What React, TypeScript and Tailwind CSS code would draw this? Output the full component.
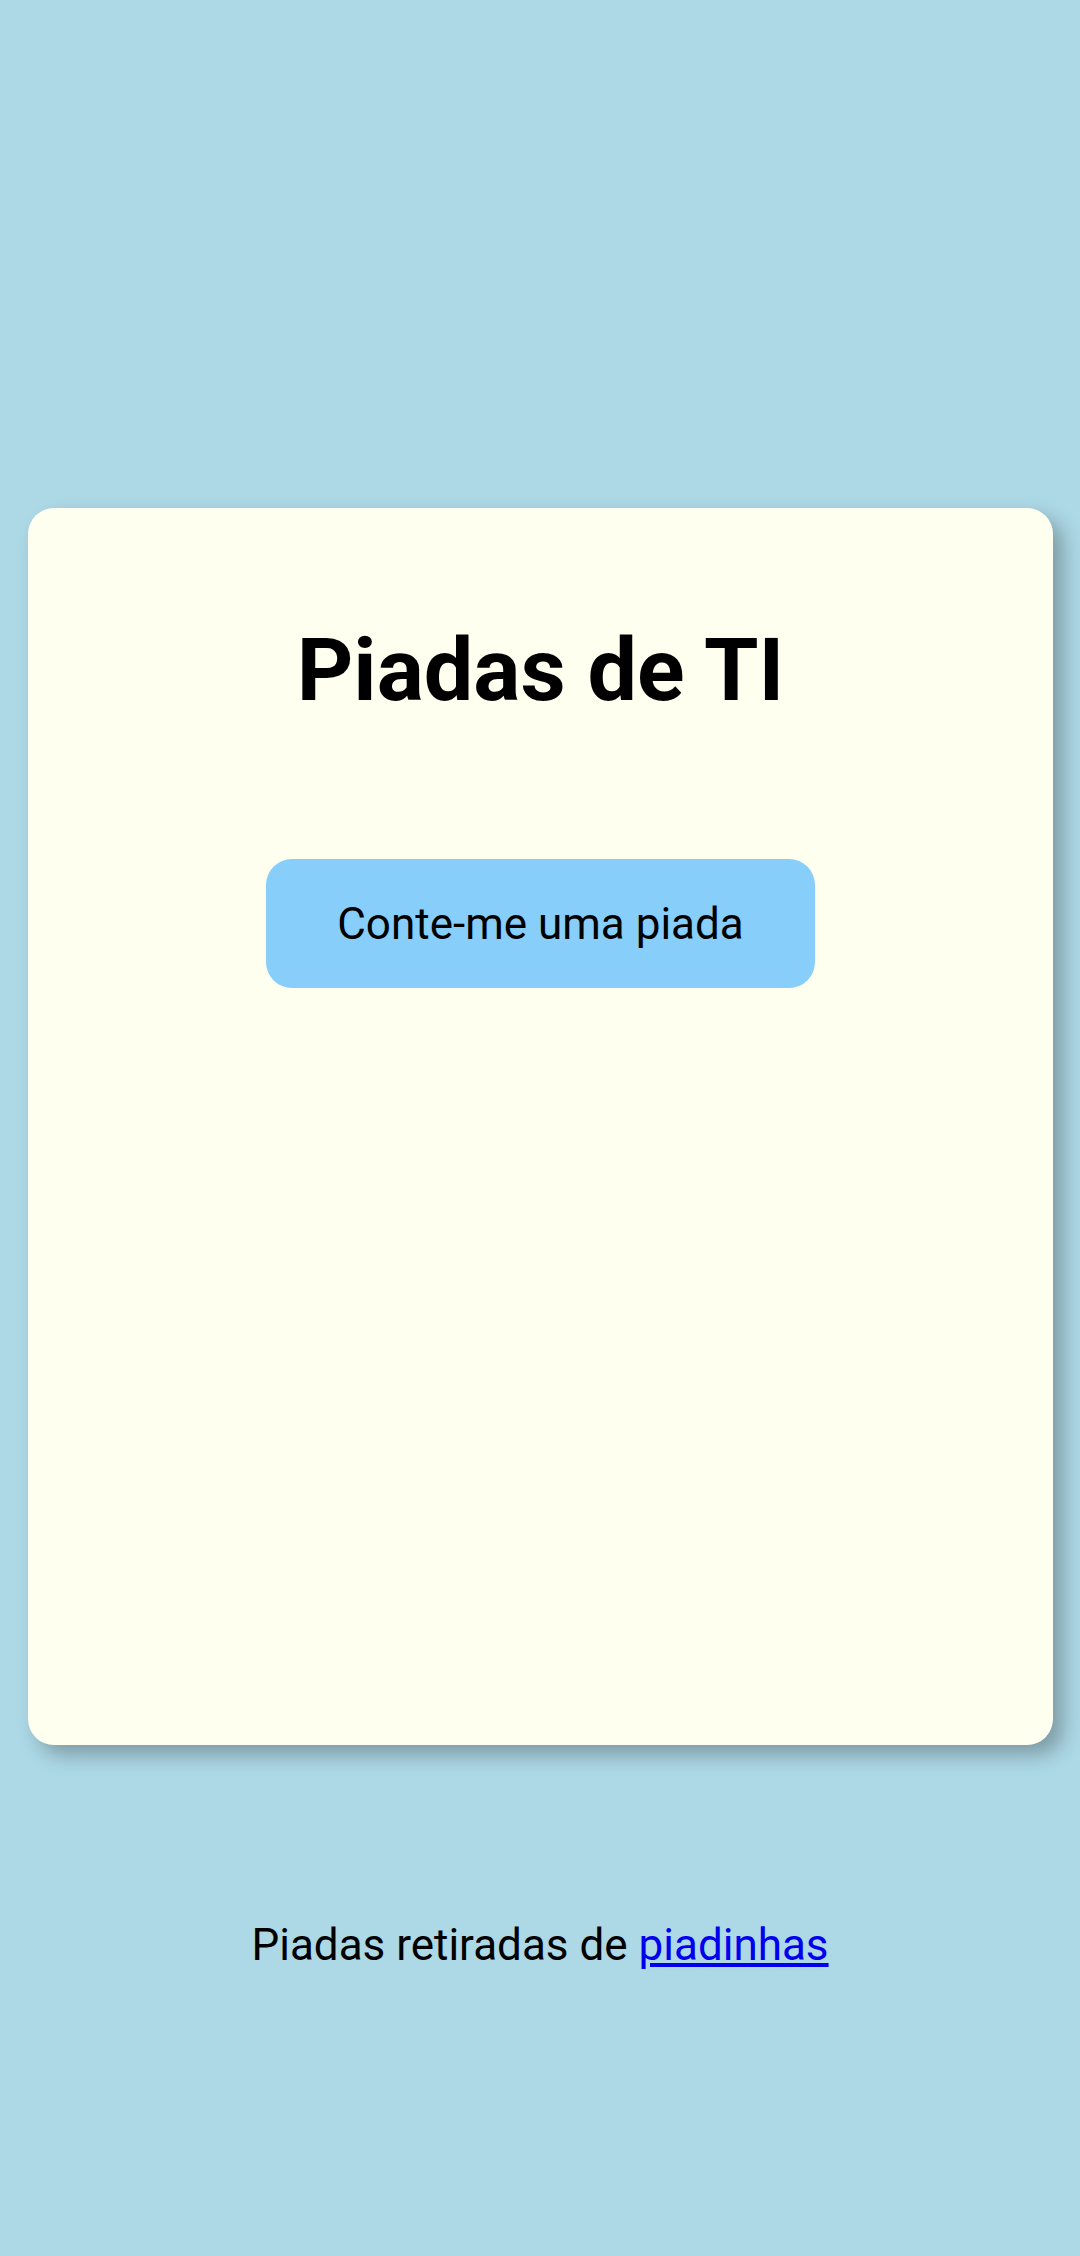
import React from "react";

export default function App() {
  return (
    <div
      className="min-h-[2256px] w-full bg-[#add8e6] flex flex-col items-stretch"
      style={{ fontFamily: "Roboto, 'Noto Sans', sans-serif" }}
    >
      <div className="mt-[508px] ml-[28px] mr-[27px] h-[1237px] rounded-[26px] bg-[#fffff0] shadow-[10px_10px_20px_rgba(0,0,0,0.28)] flex flex-col items-center pt-[118px]">
        <h1 className="text-[88px] leading-[88px] font-bold text-black">Piadas de TI</h1>
        <button className="mt-[145px] w-[549px] h-[129px] rounded-[26px] bg-[#87cefa] text-[44px] leading-[44px] text-black">
          Conte-me uma piada
        </button>
      </div>
      <div className="mt-[178px] text-center text-[44px] leading-[44px] text-black">
        Piadas retiradas de{" "}
        <a href="#" className="text-[#0000ee] underline">
          piadinhas
        </a>
      </div>
    </div>
  );
}
